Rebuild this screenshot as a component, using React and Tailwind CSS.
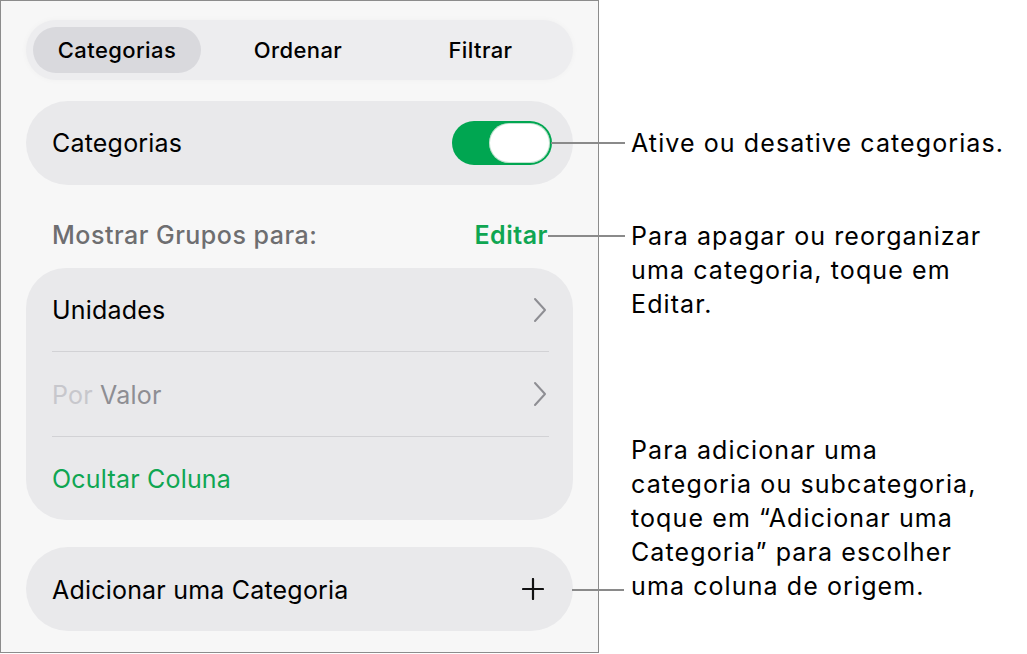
export default function App() {
  return (
    <div className="relative flex w-[1027px] h-[654px] bg-white overflow-hidden font-[Inter,sans-serif] text-black">
      {/* Panel */}
      <div className="w-[599px] h-[653px] shrink-0 border border-[#8c8c8c] bg-[#f7f7f7] px-[25px] pt-[19px] flex flex-col">
        {/* Segmented */}
        <div className="h-[60px] rounded-full bg-[#ededef] p-[7px] flex items-stretch shadow-[0_0_6px_rgba(0,0,0,0.03)] text-[22px] font-medium tracking-[0.4px]">
          <div className="w-[168px] rounded-full bg-[#d9d9dd] flex items-center justify-center">Categorias</div>
          <div className="w-[194px] flex items-center justify-center">Ordenar</div>
          <div className="flex-1 flex items-center justify-center">Filtrar</div>
        </div>
        {/* Toggle row */}
        <div className="mt-[21px] h-[84px] rounded-full bg-[#e9e9eb] pl-[26px] pr-[21px] flex items-center justify-between">
          <span className="mt-[2px] text-[25px] tracking-[0.2px]">Categorias</span>
          <div className="w-[100px] h-[44px] rounded-full bg-[#00a651] p-[2px] flex justify-end">
            <div className="w-[61px] h-[40px] rounded-full bg-white shadow-[inset_0_0_0_1px_rgba(0,140,60,0.25)]" />
          </div>
        </div>
        {/* Header */}
        <div className="h-[83px] pt-[35px] pl-[26px] pr-[25px] flex justify-between items-start leading-[30px] text-[25px]">
          <span className="text-[#6e6e70] font-medium tracking-[0.5px]">Mostrar Grupos para:</span>
          <span className="text-[#0fa652] font-semibold tracking-[0.5px]">Editar</span>
        </div>
        {/* Group card */}
        <div className="rounded-[40px] bg-[#e9e9eb] pl-[26px] pr-[24px] flex flex-col text-[25px] tracking-[0.2px]">
          <div className="h-[84px] flex items-center justify-between border-b border-[#d2d2d5]">
            <span className="mt-[3px]">Unidades</span>
            <Chevron />
          </div>
          <div className="h-[85px] flex items-center justify-between border-b border-[#d2d2d5]">
            <span className="mt-[3px]"><span className="text-[#c7c7cc]">Por</span> <span className="text-[#8e8e93]">Valor</span></span>
            <Chevron />
          </div>
          <div className="h-[83px] flex items-center">
            <span className="mt-[3px] text-[#0fa652]">Ocultar Coluna</span>
          </div>
        </div>
        {/* Add */}
        <div className="mt-[27px] h-[84px] rounded-full bg-[#e9e9eb] pl-[26px] pr-[29px] flex items-center justify-between">
          <span className="mt-[3px] text-[25px] tracking-[0.2px]">Adicionar uma Categoria</span>
          <svg width="22" height="22" viewBox="0 0 22 22" className="block">
            <path d="M11 1v20M1 11h20" stroke="#111" strokeWidth="2.2" strokeLinecap="round" />
          </svg>
        </div>
      </div>

      {/* Callouts */}
      <div className="flex-1 pl-[32px] pt-[126px] text-[25px] leading-[34px] tracking-[1.1px] text-black whitespace-nowrap">
        <p>Ative ou desative categorias.</p>
        <p className="mt-[59px]">Para apagar ou reorganizar<br />uma categoria, toque em<br />Editar.</p>
        <p className="mt-[112px]">Para adicionar uma<br />categoria ou subcategoria,<br />toque em “Adicionar uma<br />Categoria” para escolher<br />uma coluna de origem.</p>
      </div>

      {/* Leader lines */}
      <div className="absolute left-[551px] top-[142px] w-[74px] h-[2px] bg-[#8a8a8a]" />
      <div className="absolute left-[548px] top-[235px] w-[77px] h-[2px] bg-[#8a8a8a]" />
      <div className="absolute left-[572px] top-[589px] w-[52px] h-[2px] bg-[#8a8a8a]" />
    </div>
  );
}

function Chevron() {
  return (
    <svg width="16" height="26" viewBox="0 0 16 26" className="block mr-[1px]">
      <path d="M3 2l10 11L3 24" fill="none" stroke="#8e8e93" strokeWidth="2" strokeLinecap="round" strokeLinejoin="round" />
    </svg>
  );
}
